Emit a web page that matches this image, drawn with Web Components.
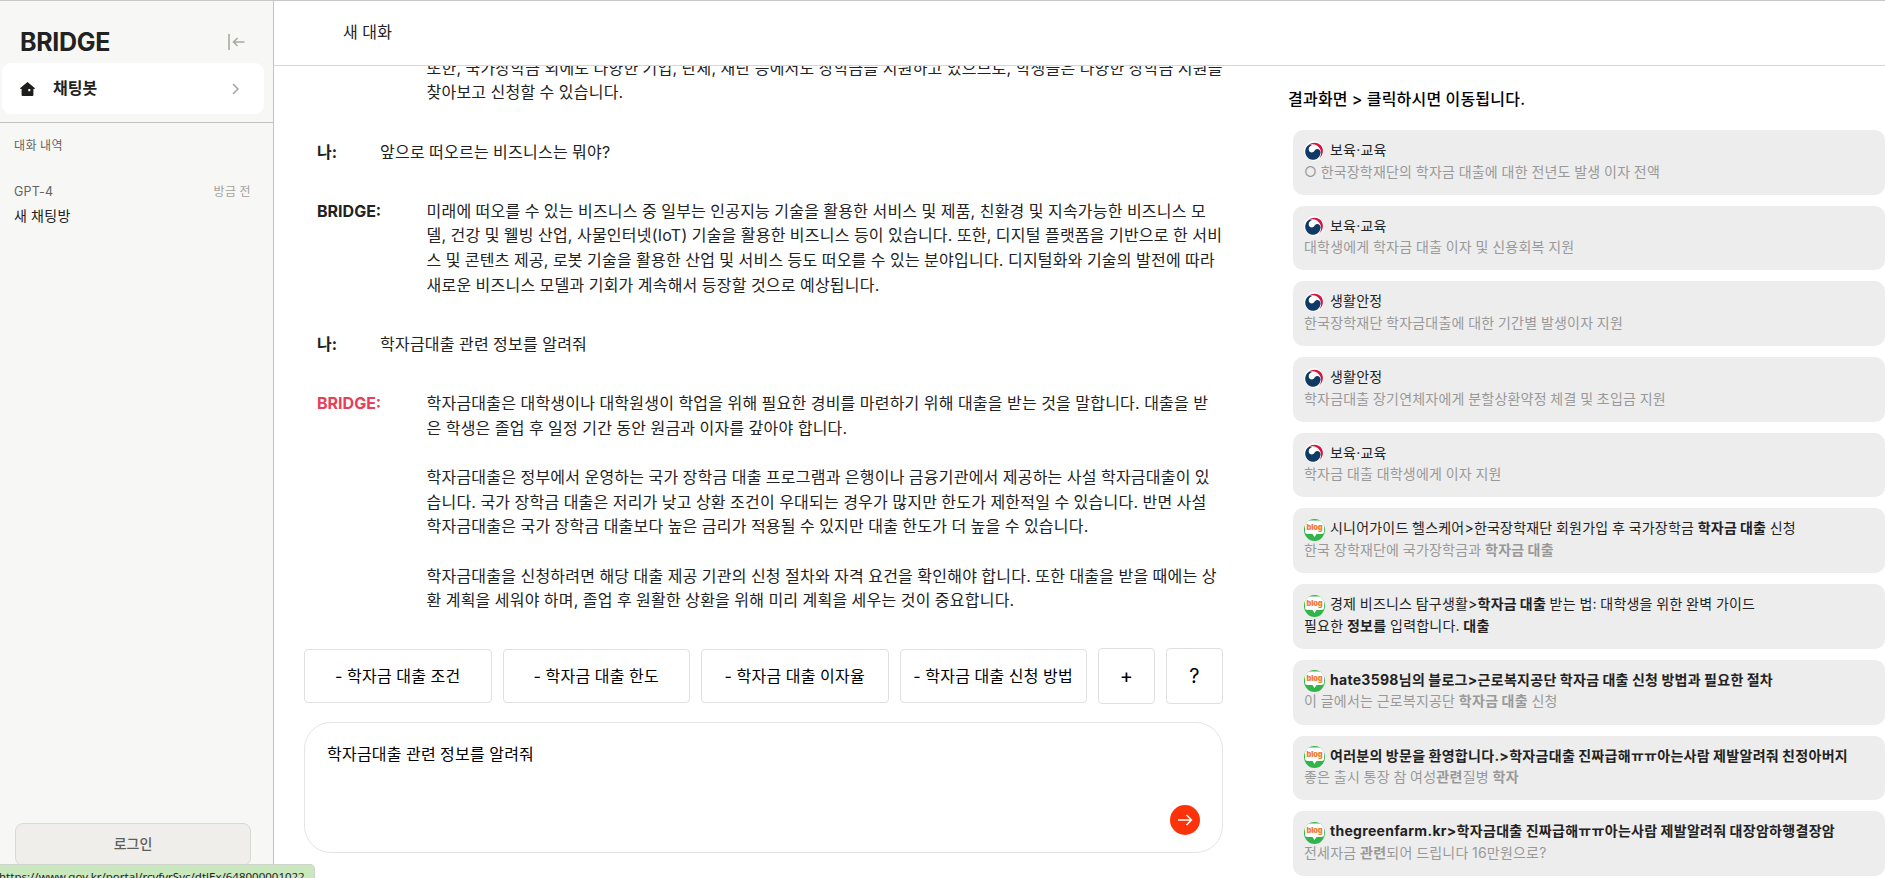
<!DOCTYPE html>
<html lang="ko">
<head>
<meta charset="utf-8">
<title>BRIDGE</title>
<style>
  html, body {
    margin: 0;
    height: 100%;
    overflow: hidden;
  }
  body {
    font-family: Inter, "Noto Sans CJK KR", sans-serif;
    font-size: 16px;
    letter-spacing: 0.23px;
    word-spacing: -0.5px;
    color: #222;
    background: #fff;
  }
</style>
</head>
<body>
<bridge-app></bridge-app>

<script>
  // small helper so every component gets its shadow root the same way
  class BaseElement extends HTMLElement {
    constructor() {
      super();
      this.attachShadow({ mode: 'open' });
    }

    connectedCallback() {
      this.shadowRoot.innerHTML = this.render();
    }
  }

  class SideBar extends BaseElement {
    render() {
      return `
        <style>
          :host {
            display: flex;
            flex-direction: column;
            width: 273px;
            flex: none;
            background: #f7f7f5;
            border-right: 1px solid #c3c3bd;
          }
          header {
            display: flex;
            align-items: center;
            justify-content: space-between;
            height: 28px;
            padding: 27px 28px 7px 20px;
          }
          h1 {
            margin: 0;
            font-size: 25px;
            font-weight: 700;
            letter-spacing: -0.3px;
          }
          .nav {
            display: flex;
            align-items: center;
            height: 51px;
            margin: 0 9px 8px 2px;
            padding: 0 25px 0 18px;
            box-sizing: border-box;
            border-radius: 9px;
            background: #fff;
            font-weight: 700;
            letter-spacing: 0;
          }
          .nav span {
            flex: 1;
            margin-left: 18px;
            padding-bottom: 3px;
          }
          .history {
            flex: 1;
            border-top: 1px solid #c3c3bd;
            padding: 13px 22px 0 14px;
            font-size: 12px;
            line-height: 20px;
            letter-spacing: 0.35px;
            color: #63635f;
          }
          .row {
            display: flex;
            justify-content: space-between;
            margin-top: 26px;
          }
          .row span {
            font-size: 12.5px;
            letter-spacing: 0.2px;
          }
          .row time { color: #a3a39c; }
          .room {
            margin-top: 4px;
            font-size: 14px;
            color: #222;
          }
          button {
            height: 43px;
            margin: 0 22px 12px 15px;
            padding: 0 0 4px;
            border: 1px solid #dadad5;
            border-radius: 8px;
            background: #efeeeb;
            font: 500 14px Inter, "Noto Sans CJK KR", sans-serif;
            color: #5f5f5b;
          }
          svg { display: block; }
        </style>
        <header>
          <h1>BRIDGE</h1>
          <svg width="17" height="16" viewBox="0 0 17 16" fill="none" stroke="#a9a99f" stroke-width="1.6">
            <path d="M1 0V16M16.5 8H6M9.5 4L5.5 8L9.5 12"/>
          </svg>
        </header>
        <div class="nav">
          <svg width="15" height="14" viewBox="0 0 15 14">
            <path fill="#1d1d1b" fill-rule="evenodd" d="M7.5 0L15 6.2L14.2 7.3L13.4 6.8V13Q13.4 14 12.4 14H2.6Q1.6 14 1.6 13V6.8L.8 7.3L0 6.2ZM8.3 7V9.3H10.3V7Z"/>
          </svg>
          <span>채팅봇</span>
          <svg width="7" height="12" viewBox="0 0 7 12" fill="none" stroke="#a3a39c" stroke-width="1.5">
            <path d="M1 1L6 6L1 11"/>
          </svg>
        </div>
        <div class="history">
          <div>대화 내역</div>
          <div class="row"><span>GPT-4</span><time>방금 전</time></div>
          <div class="room">새 채팅방</div>
        </div>
        <button>로그인</button>
      `;
    }
  }

  class ChatMessage extends BaseElement {
    render() {
      const user = this.getAttribute('from') === 'user';
      // a continued message has its label scrolled out of the log
      const label = this.hasAttribute('continued') ? '' : (user ? '나:' : 'BRIDGE:');
      return `
        <style>
          :host {
            display: flex;
            margin-bottom: 34.6px;
            line-height: 24.64px;
            white-space: nowrap;
          }
          b {
            width: ${user ? 63 : 109.5}px;
            flex: none;
            font-weight: 700;
            letter-spacing: 0;
          }
          :host([active]) b { color: #e83e57; }
        </style>
        <b>${label}</b>
        <div><slot></slot></div>
      `;
    }
  }

  class SuggestChip extends BaseElement {
    render() {
      return `
        <style>
          :host {
            display: flex;
            align-items: center;
            justify-content: center;
            box-sizing: border-box;
            width: 187.5px;
            height: 54px;
            padding-bottom: 2px;
            border: 1px solid #e0e0e0;
            border-radius: 4px;
            color: #000;
            letter-spacing: 0.28px;
            white-space: nowrap;
          }
          :host([square]) {
            width: 57px;
            height: 56px;
            padding: 0;
            font-size: 20px;
          }
        </style>
        <slot></slot>
      `;
    }
  }

  class ChatInput extends BaseElement {
    render() {
      return `
        <style>
          :host {
            display: flex;
            justify-content: space-between;
            box-sizing: border-box;
            height: 131px;
            padding: 19px 22px 17px;
            border: 1px solid #e4e4e4;
            border-radius: 27px;
            line-height: 24px;
            color: #000;
          }
          svg { align-self: flex-end; }
        </style>
        <div><slot></slot></div>
        <svg width="30" height="30" viewBox="0 0 30 30" fill="none">
          <circle cx="15" cy="15" r="15" fill="#fb320a"/>
          <path d="M8 15H21.5M16.5 10L21.5 15L16.5 20" stroke="#fff" stroke-width="1.5"/>
        </svg>
      `;
    }
  }

  class ResultCard extends BaseElement {
    icon() {
      if (this.getAttribute('kind') === 'blog') {
        return `
          <svg width="21" height="22" viewBox="0 0 21 22">
            <clipPath id="c"><ellipse cx="10.5" cy="11" rx="10.5" ry="11"/></clipPath>
            <g clip-path="url(#c)">
              <rect width="21" height="22" fill="#33b44a"/>
              <path fill="#fff" d="M1 4Q1 1.500 3.500 1.500H17.500Q20 1.500 20 4V12.500Q20 15 17.500 15H12.500L10.500 18L8.500 15H3.500Q1 15 1 12.500Z"/>
            </g>
            <text x="10.5" y="10.800" text-anchor="middle" font-size="7.500" font-weight="900" letter-spacing="-0.2" fill="#f07a35">blog</text>
          </svg>`;
      }
      return `
        <svg width="20" height="20" viewBox="-0.300 -0.300 20.600 20.600">
          <circle cx="10" cy="10" r="10.200" fill="#fff"/>
          <path fill="#d8143c" d="M4.500 3.700C9.500-.8 18.800 1.500 19.200 9.500C19.300 13 17.800 16 15.200 18C17.300 15 18 11.500 16.500 8.500C14.500 3.500 9 2.200 4.500 3.700Z"/>
          <path fill="#0f3a66" d="M5 3.500C-.5 6.500-.2 14.500 4.500 17.700C9.500 21 16.500 17.800 16.800 11.500C17 8 12.500 6.500 10.700 9.500C9.500 12 6 12.300 4.900 9.800C3.800 7 5.500 4.800 8 3.800Q6.500 3.200 5 3.500Z"/>
        </svg>`;
    }

    render() {
      return `
        <style>
          :host {
            display: block;
            box-sizing: border-box;
            height: 64.7px;
            padding: 8.500px 11px 0;
            border-radius: 10px;
            background: #ededed;
            font-size: 14px;
            letter-spacing: 0.2px;
            white-space: nowrap;
          }
          .title {
            display: flex;
            align-items: center;
            height: 22px;
          }
          .title div {
            margin-left: 6px;
            padding-bottom: 1px;
          }
          :host([kind="blog"]) .title div { margin-left: 5px; }
          svg { position: relative; top: 1px; }
          :host([kind="blog"]) svg { top: 2px; }
          ::slotted(b) { letter-spacing: 0.3px; }
          .desc {
            line-height: 22px;
            color: #999;
          }
          :host([visited]) .desc { color: #222; }
        </style>
        <div class="title">${this.icon()}<div><slot name="title"></slot></div></div>
        <div class="desc"><slot></slot></div>
      `;
    }
  }

  class ResultPanel extends BaseElement {
    render() {
      return `
        <style>
          :host {
            display: flex;
            flex-direction: column;
            gap: 11px;
            width: 592px;
            flex: none;
          }
          h2 {
            margin: 21px 0 8px -5px;
            font-size: 16px;
            font-weight: 500;
            line-height: 24px;
            color: #000;
          }
        </style>
        <h2>결과화면 &gt; 클릭하시면 이동됩니다.</h2>
        <slot></slot>
      `;
    }
  }

  class StatusBubble extends BaseElement {
    render() {
      return `
        <style>
          :host {
            position: absolute;
            left: 0;
            top: 864px;
            box-sizing: border-box;
            width: 315px;
            height: 26px;
            border: 1px solid #d0d4ce;
            border-left: 0;
            border-radius: 0 5px 0 0;
            background: #c9e8bd;
            font: 11.500px/24px "Noto Sans", sans-serif;
            letter-spacing: 0;
            white-space: nowrap;
            text-indent: -1px;
          }
        </style>
        <slot></slot>
      `;
    }
  }

  class BridgeApp extends BaseElement {
    render() {
      return `
        <style>
          :host {
            display: flex;
            box-sizing: border-box;
            height: 878px;
            border-top: 1px solid #c8c8c8;
            overflow: hidden;
          }
          main {
            flex: 1;
            display: flex;
            flex-direction: column;
            min-width: 0;
          }
          .top {
            height: 65px;
            box-sizing: border-box;
            padding: 19px 0 0 69px;
            border-bottom: 1px solid #d6d6d6;
            line-height: 24px;
          }
          .content {
            flex: 1;
            display: flex;
            justify-content: space-between;
            min-height: 0;
          }
          .chat {
            width: 919px;
            margin-left: 30px;
            display: flex;
            flex-direction: column;
          }
          /* scrolled to the bottom, so the oldest message is cut off */
          .log {
            height: 581.500px;
            display: flex;
            flex-direction: column;
            justify-content: flex-end;
            overflow: hidden;
            padding-left: 13px;
          }
          .chips {
            display: flex;
            align-items: center;
            justify-content: space-between;
            margin: 0.500px 0 18px;
          }
        </style>
        <side-bar></side-bar>
        <main>
          <div class="top">새 대화</div>
          <div class="content">
            <div class="chat">
              <div class="log">
                <chat-message continued>또한, 국가장학금 외에도 다양한 기업, 단체, 재단 등에서도 장학금을 지원하고 있으므로, 학생들은 다양한 장학금 지원을<br>찾아보고 신청할 수 있습니다.</chat-message>
                <chat-message from="user">앞으로 떠오르는 비즈니스는 뭐야?</chat-message>
                <chat-message>미래에 떠오를 수 있는 비즈니스 중 일부는 인공지능 기술을 활용한 서비스 및 제품, 친환경 및 지속가능한 비즈니스 모<br>델, 건강 및 웰빙 산업, 사물인터넷(IoT) 기술을 활용한 비즈니스 등이 있습니다. 또한, 디지털 플랫폼을 기반으로 한 서비<br>스 및 콘텐츠 제공, 로봇 기술을 활용한 산업 및 서비스 등도 떠오를 수 있는 분야입니다. 디지털화와 기술의 발전에 따라<br>새로운 비즈니스 모델과 기회가 계속해서 등장할 것으로 예상됩니다.</chat-message>
                <chat-message from="user">학자금대출 관련 정보를 알려줘</chat-message>
                <chat-message active>학자금대출은 대학생이나 대학원생이 학업을 위해 필요한 경비를 마련하기 위해 대출을 받는 것을 말합니다. 대출을 받<br>은 학생은 졸업 후 일정 기간 동안 원금과 이자를 갚아야 합니다.<br><br>학자금대출은 정부에서 운영하는 국가 장학금 대출 프로그램과 은행이나 금융기관에서 제공하는 사설 학자금대출이 있<br>습니다. 국가 장학금 대출은 저리가 낮고 상환 조건이 우대되는 경우가 많지만 한도가 제한적일 수 있습니다. 반면 사설<br>학자금대출은 국가 장학금 대출보다 높은 금리가 적용될 수 있지만 대출 한도가 더 높을 수 있습니다.<br><br>학자금대출을 신청하려면 해당 대출 제공 기관의 신청 절차와 자격 요건을 확인해야 합니다. 또한 대출을 받을 때에는 상<br>환 계획을 세워야 하며, 졸업 후 원활한 상환을 위해 미리 계획을 세우는 것이 중요합니다.</chat-message>
              </div>
              <div class="chips">
                <suggest-chip>- 학자금 대출 조건</suggest-chip>
                <suggest-chip>- 학자금 대출 한도</suggest-chip>
                <suggest-chip>- 학자금 대출 이자율</suggest-chip>
                <suggest-chip>- 학자금 대출 신청 방법</suggest-chip>
                <suggest-chip square>+</suggest-chip>
                <suggest-chip square>?</suggest-chip>
              </div>
              <chat-input>학자금대출 관련 정보를 알려줘</chat-input>
            </div>
            <result-panel>
              <result-card><span slot="title">보육·교육</span>○ 한국장학재단의 학자금 대출에 대한 전년도 발생 이자 전액</result-card>
              <result-card><span slot="title">보육·교육</span>대학생에게 학자금 대출 이자 및 신용회복 지원</result-card>
              <result-card><span slot="title">생활안정</span>한국장학재단 학자금대출에 대한 기간별 발생이자 지원</result-card>
              <result-card><span slot="title">생활안정</span>학자금대출 장기연체자에게 분할상환약정 체결 및 초입금 지원</result-card>
              <result-card><span slot="title">보육·교육</span>학자금 대출 대학생에게 이자 지원</result-card>
              <result-card kind="blog"><span slot="title">시니어가이드 헬스케어&gt;한국장학재단 회원가입 후 국가장학금 <b>학자금 대출</b> 신청</span>한국 장학재단에 국가장학금과 <b>학자금 대출</b></result-card>
              <result-card kind="blog" visited><span slot="title">경제 비즈니스 탐구생활&gt;<b>학자금 대출</b> 받는 법: 대학생을 위한 완벽 가이드</span>필요한 <b>정보를</b> 입력합니다. <b>대출</b></result-card>
              <result-card kind="blog"><b slot="title">hate3598님의 블로그&gt;근로복지공단 학자금 대출 신청 방법과 필요한 절차</b>이 글에서는 근로복지공단 <b>학자금 대출</b> 신청</result-card>
              <result-card kind="blog"><b slot="title">여러분의 방문을 환영합니다.&gt;학자금대출 진짜급해ㅠㅠ아는사람 제발알려줘 친정아버지</b>좋은 출시 통장 참 여성<b>관련</b>질병 <b>학자</b></result-card>
              <result-card kind="blog"><b slot="title">thegreenfarm.kr&gt;학자금대출 진짜급해ㅠㅠ아는사람 제발알려줘 대장암하행결장암</b>전세자금 <b>관련</b>되어 드립니다 16만원으로?</result-card>
            </result-panel>
          </div>
        </main>
        <status-bubble>https://www.gov.kr/portal/rcvfvrSvc/dtlEx/648000001022</status-bubble>
      `;
    }
  }

  customElements.define('side-bar', SideBar);
  customElements.define('chat-message', ChatMessage);
  customElements.define('suggest-chip', SuggestChip);
  customElements.define('chat-input', ChatInput);
  customElements.define('result-card', ResultCard);
  customElements.define('result-panel', ResultPanel);
  customElements.define('status-bubble', StatusBubble);
  customElements.define('bridge-app', BridgeApp);
</script>
</body>
</html>
